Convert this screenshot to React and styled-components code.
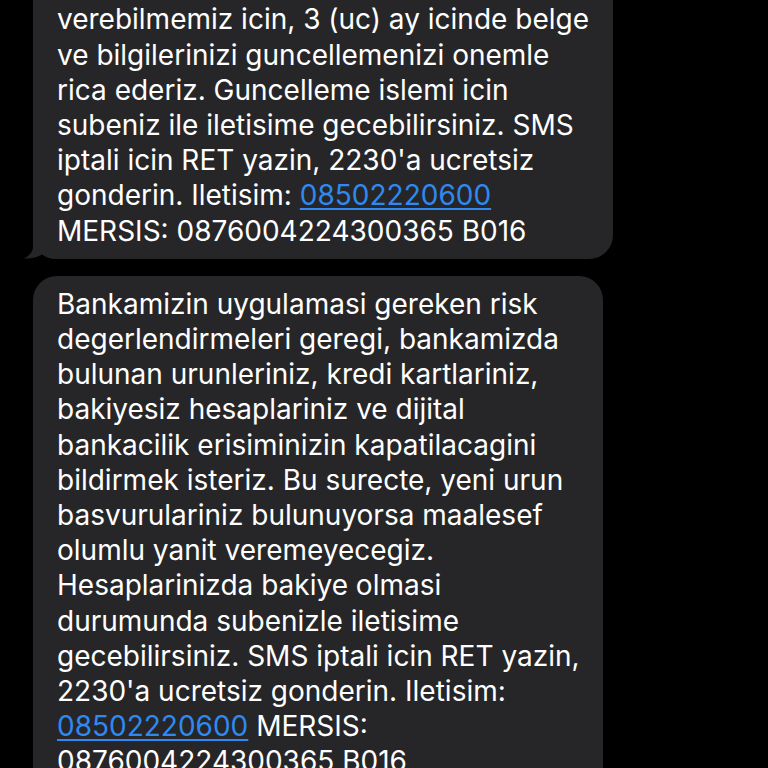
import React from 'react'
import styled, { createGlobalStyle } from 'styled-components'

const GlobalStyle = createGlobalStyle`
  html, body {
    margin: 0;
    padding: 0;
    background: #000;
  }

  body {
    font-family: 'Inter', 'Noto Sans', sans-serif;
    -webkit-font-smoothing: antialiased;
  }
`

const Screen = styled.div`
  width: 768px;
  height: 768px;
  overflow: hidden;
  background: #000;
`

// emulates the scroll position of the conversation
const Thread = styled.div`
  display: flex;
  flex-direction: column;
  gap: 17px;
  padding-left: 33px;
  margin-top: -79px;
`

const Bubble = styled.div`
  position: relative;
  box-sizing: border-box;
  width: ${p => p.$width}px;
  padding: 11px 0 10px 24px;
  background: #262628;
  border-radius: 24px;
  color: #fff;
  font-size: 28px;
  line-height: 35.2px;
  letter-spacing: 0;
`

const Line = styled.div`
  white-space: nowrap;
`

const Link = styled.span`
  color: #2f89f0;
  text-decoration: underline;
  text-decoration-thickness: 2px;
  text-underline-offset: 3px;
`

const Tail = styled.svg`
  position: absolute;
  left: -10px;
  bottom: 0;
  width: 34px;
  height: 24px;
`

const first = [
  ['kayitli bilgilerinizin guncel olmamasi nedeniyle,'],
  ['size daha iyi hizmet sunabilmemiz ve'],
  ['verebilmemiz icin, 3 (uc) ay icinde belge'],
  ['ve bilgilerinizi guncellemenizi onemle'],
  ['rica ederiz. Guncelleme islemi icin'],
  ['subeniz ile iletisime gecebilirsiniz. SMS'],
  ["iptali icin RET yazin, 2230'a ucretsiz"],
  ['gonderin. Iletisim: ', { link: '08502220600' }],
  ['MERSIS: 0876004224300365 B016']
]

const second = [
  ['Bankamizin uygulamasi gereken risk'],
  ['degerlendirmeleri geregi, bankamizda'],
  ['bulunan urunleriniz, kredi kartlariniz,'],
  ['bakiyesiz hesaplariniz ve dijital'],
  ['bankacilik erisiminizin kapatilacagini'],
  ['bildirmek isteriz. Bu surecte, yeni urun'],
  ['basvurulariniz bulunuyorsa maalesef'],
  ['olumlu yanit veremeyecegiz.'],
  ['Hesaplarinizda bakiye olmasi'],
  ['durumunda subenizle iletisime'],
  ["gecebilirsiniz. SMS iptali icin RET yazin,"],
  ["2230'a ucretsiz gonderin. Iletisim:"],
  [{ link: '08502220600' }, ' MERSIS:'],
  ['0876004224300365 B016']
]

const renderLines = lines =>
  lines.map((parts, idx) => (
    <Line key={idx}>
      {parts.map((part, i) =>
        typeof part === 'string' ? part : <Link key={i}>{part.link}</Link>
      )}
    </Line>
  ))

export default function App() {
  return (
    <Screen>
      <GlobalStyle />
      <Thread>
        <Bubble $width={580}>
          {renderLines(first)}
          <Tail viewBox='0 0 34 24'>
            <path
              d='M10 0 L10 12 C10 17 6 21 1 23.5 C8 24 14 22.5 19 19.5 C23 22.5 28 24 34 24 L34 0 Z'
              fill='#262628'
            />
          </Tail>
        </Bubble>
        <Bubble $width={570}>{renderLines(second)}</Bubble>
      </Thread>
    </Screen>
  )
}
